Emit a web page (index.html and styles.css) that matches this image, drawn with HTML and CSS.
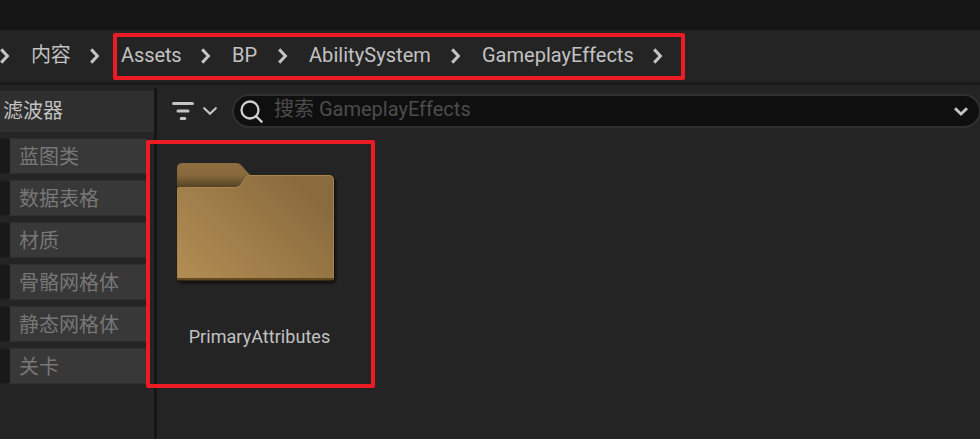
FILE: index.html
```
<!DOCTYPE html>
<html lang="zh-CN">
<head>
<meta charset="utf-8">
<title>内容浏览器</title>
<link rel="stylesheet" href="styles.css">
</head>
<body>
<svg class="defs" width="0" height="0" aria-hidden="true">
  <symbol id="chev" viewBox="0 0 10 16"><path d="M1.200 1.400 7.400 8l-6.200 6.600" fill="none" stroke="#c4c4c4" stroke-width="3"/></symbol>
</svg>
<div class="browser">
  <div class="topbar"></div>
  <nav class="crumbs">
    <svg class="chev first"><use href="#chev"/></svg>
    <span class="crumb c-content">内容</span>
    <svg class="chev"><use href="#chev"/></svg>
    <span class="crumb c-assets">Assets</span>
    <svg class="chev"><use href="#chev"/></svg>
    <span class="crumb c-bp">BP</span>
    <svg class="chev"><use href="#chev"/></svg>
    <span class="crumb c-ability">AbilitySystem</span>
    <svg class="chev"><use href="#chev"/></svg>
    <span class="crumb c-effects">GameplayEffects</span>
    <svg class="chev"><use href="#chev"/></svg>
  </nav>
  <div class="body">
    <aside class="sidebar">
      <h2>滤波器</h2>
      <ul class="filters">
        <li>蓝图类</li>
        <li>数据表格</li>
        <li>材质</li>
        <li>骨骼网格体</li>
        <li>静态网格体</li>
        <li>关卡</li>
      </ul>
    </aside>
    <div class="divider"></div>
    <main class="content">
      <div class="toolbar">
        <svg class="filter-icon" width="46" height="22" viewBox="0 0 46 22" fill="none" stroke="#c4c4c4" stroke-linecap="round">
          <path d="M1.500 3.500h19M6 11h10M9.200 18.500h3.600" stroke-width="3"/>
          <path d="m32.200 8.200 5.800 5.600 5.800-5.600" stroke-width="2.200"/>
        </svg>
        <div class="search">
          <svg class="lens" width="24" height="24" viewBox="0 0 24 24" fill="none" stroke="#d0d0d0" stroke-width="2.300"><circle cx="10" cy="10" r="8.500"/><path d="m15.800 16 6.500 6.300"/></svg>
          <span>搜索 GameplayEffects</span>
          <svg class="drop" width="16" height="12" viewBox="0 0 16 12" fill="none" stroke="#c4c4c4" stroke-width="2.900"><path d="m2 2.200 6 5.800 6-5.800"/></svg>
        </div>
      </div>
      <div class="asset">
        <svg width="164" height="126" viewBox="0 0 164 126">
          <defs>
            <linearGradient id="face" gradientUnits="userSpaceOnUse" x1="14" y1="130" x2="124" y2="20"><stop offset="0" stop-color="#b38d53"/><stop offset=".5" stop-color="#9f7d49"/><stop offset="1" stop-color="#8a6b3e"/></linearGradient>
            <linearGradient id="tab" x1="0" y1="0" x2="0" y2="1"><stop offset="0" stop-color="#8d6e40"/><stop offset=".5" stop-color="#876a3d"/><stop offset="1" stop-color="#554224"/></linearGradient>
            <filter id="soft" x="-5%" y="-5%" width="110%" height="112%"><feGaussianBlur stdDeviation="1"/></filter>
          </defs>
          <path d="M2 30h70V15h80q8 0 8 6v95q0 5-5 5H6q-4 0-4-4z" fill="#080808" filter="url(#soft)"/>
          <path d="M1 25V6q0-5 6-5h53q3 0 5 2l9 10-4 12z" fill="url(#tab)"/>
          <path d="M1 27q0-2 2-2h57q3 0 5-3l5-7q1-2 3-2h80q5 0 5 6v97q0 2-2 2H3q-2 0-2-2z" fill="url(#face)"/>
          <path d="M1.500 116V27q0-1.500 2-1.500H60q3 0 5-3l5-7q1-2 3-2h80q4.500 0 4.500 5.500v97" fill="none" stroke="#a98448"/>
          <path d="M1 116h157q0 2.500-2 2.500H3q-2 0-2-2.500z" fill="#62491f"/>
        </svg>
        <span>PrimaryAttributes</span>
      </div>
    </main>
  </div>
  <div class="mark mark-path"></div>
  <div class="mark mark-folder"></div>
</div>
</body>
</html>
```
FILE: styles.css
```
* { box-sizing: border-box; }
body { margin: 0; background: #242424; color: #c2c2c2; font: 20px/26px Roboto, "Noto Sans CJK SC", sans-serif; }
.defs { position: absolute; }
.browser { position: relative; display: flex; flex-direction: column; width: 980px; height: 439px; overflow: hidden; }
.topbar { height: 30px; background: #151515; }
.crumbs { display: flex; align-items: center; height: 55px; padding-bottom: 3px; border-bottom: 3px solid #1a1a1a; white-space: nowrap; }
.chev { flex: none; width: 10px; height: 16px; margin: 2px 21px 0 20px; }
.chev.first { margin-left: 0; margin-right: 21px; }
.crumb { flex: none; }
.c-content { width: 39px; padding-top: 1px; letter-spacing: -.3px; }
.c-assets { width: 60px; letter-spacing: -.1px; }
.c-bp { width: 26px; }
.c-ability { width: 122px; letter-spacing: .05px; }
.c-effects { width: 151px; }
.body { display: flex; flex: 1; min-height: 0; }
.sidebar { width: 154px; padding-top: 6px; }
.sidebar h2 { height: 41px; margin: 0 0 6px; padding: 7px 3px; background: #2f2f2f; font: inherit; }
.filters { display: flex; flex-direction: column; gap: 6px; margin: 0; padding: 0; list-style: none; }
.filters li { width: 148px; height: 36px; padding: 6px 0 4px 9px; border: solid #2f2f2f; border-width: 1px 0; border-left: 10px solid #191919; border-radius: 4px; background: #383838; color: #777; line-height: 24px; }
.divider { width: 3px; margin-top: 3px; background: #151515; }
.content { flex: 1; min-width: 0; }
.toolbar { display: flex; height: 51px; padding: 9px 0 0 15px; }
.filter-icon { flex: none; margin-top: 6px; }
.search { display: flex; flex: 1; height: 34px; margin: 0 -1px 0 14px; padding: 5px 10px 0 6px; border: 2px solid #303030; border-radius: 17px; background: #0f0f0f; color: #4c4c4c; }
.lens { margin-top: -1px; }
.search span { margin: -5px auto 0 10px; }
.drop { margin-top: 5px; }
.asset { display: flex; flex-direction: column; align-items: center; width: 201px; padding-top: 26px; }
.asset span { margin: 36px 0 0 4px; font-size: 18px; letter-spacing: .05px; }
.mark { position: absolute; border: 4px solid #ed1c24; border-radius: 2px; }
.mark-path { left: 113px; top: 33px; width: 572px; height: 47px; }
.mark-folder { left: 146px; top: 140px; width: 229px; height: 248px; }
```
